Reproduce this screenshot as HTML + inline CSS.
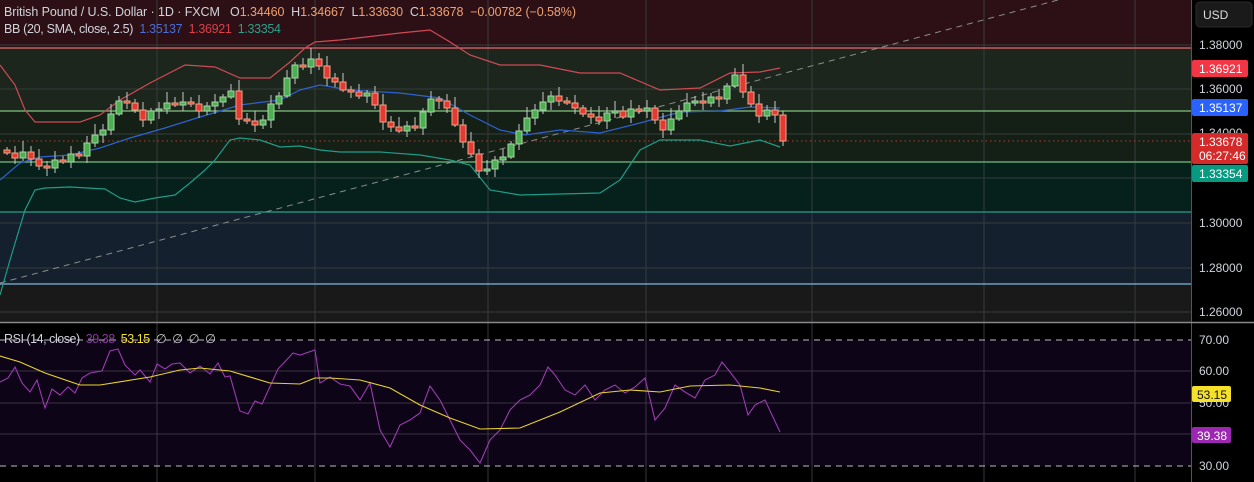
<!DOCTYPE html>
<html><head><meta charset="utf-8"><style>
html,body{margin:0;padding:0;background:#000;width:1254px;height:482px;overflow:hidden;font-family:"Liberation Sans",sans-serif}
svg{position:absolute;left:0;top:0}
.t{font-family:"Liberation Sans",sans-serif}
.lg text{white-space:pre}
</style></head><body>
<svg id="s" width="1254" height="482" xmlns="http://www.w3.org/2000/svg">
<rect x="0" y="0" width="1191" height="48" fill="#2c1015"/>
<rect x="0" y="48" width="1191" height="63" fill="#1c261d"/>
<rect x="0" y="111" width="1191" height="51" fill="#142016"/>
<rect x="0" y="162" width="1191" height="50" fill="#06201b"/>
<rect x="0" y="212" width="1191" height="72" fill="#14202e"/>
<rect x="0" y="284" width="1191" height="38" fill="#191919"/>
<g id="grid" stroke="#363c3a" stroke-width="1"></g>
<line x1="0" y1="48" x2="1191" y2="48" stroke="#e46a6f" stroke-width="1.3"/>
<line x1="0" y1="111" x2="1191" y2="111" stroke="#7fc47f" stroke-width="1.3"/>
<line x1="0" y1="162" x2="1191" y2="162" stroke="#6fbf7f" stroke-width="1.3"/>
<line x1="0" y1="212" x2="1191" y2="212" stroke="#2a9d8a" stroke-width="1.3"/>
<line x1="0" y1="284" x2="1191" y2="284" stroke="#7fb6df" stroke-width="1.3"/>
<line x1="0" y1="283" x2="1058" y2="0" stroke="#8a8f8c" stroke-width="1" stroke-dasharray="6,5"/>
<line x1="0" y1="141" x2="1191" y2="141" stroke="#c0392b" stroke-width="1" stroke-dasharray="1.5,3"/>
<g id="bb" fill="none" stroke-width="1.2"></g>
<g id="candles"></g>
<rect x="0" y="323" width="1191" height="159" fill="#000"/>
<rect x="0" y="340" width="1191" height="126" fill="#0d0418"/>
<g id="rgrid" stroke="#3a3540" stroke-width="1"></g>
<line x1="0" y1="340" x2="1191" y2="340" stroke="#bbb" stroke-dasharray="6,5"/>
<line x1="0" y1="466" x2="1191" y2="466" stroke="#bbb" stroke-dasharray="6,5"/>
<g id="rsi" fill="none" stroke-width="1.1"></g>
<line x1="0" y1="322.5" x2="1254" y2="322.5" stroke="#888" stroke-width="1.5"/>
<rect x="1192" y="0" width="62" height="482" fill="#000"/>
<line x1="1191.5" y1="0" x2="1191.5" y2="482" stroke="#555" stroke-width="1"/>
<line x1="1191" y1="322.5" x2="1254" y2="322.5" stroke="#888" stroke-width="1.5"/>
<rect x="1196" y="2" width="56" height="25" rx="4" fill="#1a1a1a" stroke="#2a2a2a"/>
<text x="1203" y="19" fill="#ddd" font-size="12" class="t">USD</text>
<g fill="#d1d4dc" font-size="12" class="t">
<text x="1199" y="49">1.38000</text>
<text x="1199" y="93">1.36000</text>
<text x="1199" y="137">1.34000</text>
<text x="1199" y="182">1.32000</text>
<text x="1199" y="227">1.30000</text>
<text x="1199" y="272">1.28000</text>
<text x="1199" y="316">1.26000</text>
<text x="1199" y="344">70.00</text>
<text x="1199" y="375">60.00</text>
<text x="1199" y="407">50.00</text>
<text x="1199" y="470">30.00</text>
</g>
<rect x="1192" y="60" width="56" height="17" rx="2" fill="#f23645"/>
<text x="1199" y="73" fill="#fff" font-size="12" class="t">1.36921</text>
<rect x="1192" y="99" width="56" height="17" rx="2" fill="#2962ff"/>
<text x="1199" y="112" fill="#fff" font-size="12" class="t">1.35137</text>
<rect x="1192" y="133" width="56" height="31" rx="2" fill="#d42a2a"/>
<text x="1199" y="146" fill="#fff" font-size="12" class="t">1.33678</text>
<text x="1199" y="160" fill="#fff" font-size="12" class="t">06:27:46</text>
<rect x="1192" y="165" width="56" height="17" rx="2" fill="#089981"/>
<text x="1199" y="178" fill="#fff" font-size="12" class="t">1.33354</text>
<rect x="1192" y="386" width="39" height="16" rx="2" fill="#f5e12a"/>
<text x="1197" y="399" fill="#111" font-size="12" class="t">53.15</text>
<rect x="1192" y="427" width="39" height="16" rx="2" fill="#9c27b0"/>
<text x="1197" y="440" fill="#fff" font-size="12" class="t">39.38</text>
<g font-size="12.5" class="t lg">
<text x="4" y="16" fill="#d1d4dc" textLength="572">British Pound / U.S. Dollar · 1D · FXCM   O<tspan fill="#f0a070">1.34460</tspan>  H<tspan fill="#f0a070">1.34667</tspan>  L<tspan fill="#f0a070">1.33630</tspan>  C<tspan fill="#f0a070">1.33678</tspan>  <tspan fill="#f0a070">−0.00782 (−0.58%)</tspan></text>
<text x="4" y="33" fill="#d1d4dc" textLength="277">BB (20, SMA, close, 2.5)  <tspan fill="#4a6fd8">1.35137</tspan>  <tspan fill="#d8404a">1.36921</tspan>  <tspan fill="#2aa08a">1.33354</tspan></text>
<text x="4" y="343" fill="#d1d4dc" textLength="212">RSI (14, close)  <tspan fill="#8a3aa0">39.38</tspan>  <tspan fill="#f5e12a">53.15</tspan>  <tspan fill="#ccc">∅  ∅  ∅  ∅</tspan></text>
</g>
</svg>
<script>
(function(){
var NS="http://www.w3.org/2000/svg";
function el(p,t,a){var e=document.createElementNS(NS,t);for(var k in a)e.setAttribute(k,a[k]);p.appendChild(e);return e;}
var g=document.getElementById('grid');
[45,89,134,178,223,268,312].forEach(function(y){el(g,'line',{x1:0,y1:y,x2:1191,y2:y});});
[157,315,488,646,812,984,1135].forEach(function(x){el(g,'line',{x1:x,y1:0,x2:x,y2:322});});
var rg=document.getElementById('rgrid');
[371,403,434].forEach(function(y){el(rg,'line',{x1:0,y1:y,x2:1191,y2:y});});
[157,315,488,646,812,984,1135].forEach(function(x){el(rg,'line',{x1:x,y1:323,x2:x,y2:482});});
function pl(p,pts,c){el(p,'polyline',{points:pts.map(function(q){return q.join(',')}).join(' '),stroke:c});}
var bb=document.getElementById('bb');
pl(bb,[[0,65],[15,85],[25,110],[35,122],[80,122],[100,115],[120,100],[150,83],[185,65],[215,67],[240,78],[270,78],[290,62],[305,48],[315,42],[340,40],[400,33],[430,30],[450,42],[470,55],[500,65],[540,65],[580,73],[620,73],[660,90],[700,88],[730,73],[760,72],[780,68]],'#d04a55');
pl(bb,[[0,180],[20,163],[40,157],[70,155],[100,148],[130,138],[165,128],[200,117],[240,105],[280,100],[300,90],[320,85],[350,90],[400,93],[440,98],[470,115],[500,130],[525,135],[560,130],[600,133],[640,123],[680,112],[720,111],[750,107],[780,108]],'#2e62d0');
pl(bb,[[0,295],[10,260],[25,210],[35,190],[45,188],[70,187],[105,189],[120,198],[135,202],[155,198],[175,195],[190,183],[205,170],[215,160],[230,140],[240,138],[260,140],[280,147],[300,146],[320,150],[340,152],[380,152],[420,155],[450,160],[470,165],[490,190],[520,195],[600,193],[620,180],[640,150],[660,140],[700,140],[730,146],[760,140],[780,147]],'#1f9c88');
var ys=[155,158,150,160,165,170,160,158,155,152,145,135,128,115,100,103,110,118,112,108,105,102,100,103,110,108,102,95,92,118,123,125,118,105,95,80,65,62,60,65,80,82,88,92,95,95,105,120,128,130,128,125,110,100,100,110,125,140,155,170,173,160,155,145,130,120,110,100,97,100,105,108,112,118,120,115,112,115,110,108,110,120,128,120,110,105,103,100,98,95,88,75,90,105,115,112,115,141];
var cg=document.getElementById('candles');
var prev=150;
for(var i=0;i<ys.length;i++){
 var x=7+i*8, o=prev, c=ys[i]+((i*7)%5-2);
 if(i==ys.length-1)c=141;
 if(Math.abs(o-c)<2)c=o+((i%2)?2:-2);
 var up=c<o, tp=Math.min(o,c), bt=Math.max(o,c);
 var w1=tp-3-(i*13)%9, w2=bt+2+(i*11)%7;
 el(cg,'line',{x1:x,y1:w1,x2:x,y2:w2,stroke:'#c8c8c8','stroke-width':1});
 el(cg,'rect',{x:x-3,y:tp,width:6,height:bt-tp,fill:up?'#4caf50':'#e53935',stroke:up?'#a5d6a7':'#f4a582','stroke-width':1});
 prev=c;
}
var r=document.getElementById('rsi');
pl(r,[[0,382],[8,378],[15,367],[22,383],[30,392],[37,380],[45,408],[52,389],[60,395],[68,387],[75,393],[82,378],[90,373],[102,371],[110,351],[118,349],[125,365],[135,375],[140,370],[150,382],[157,364],[165,369],[172,364],[180,363],[190,373],[200,366],[210,374],[218,363],[225,377],[230,376],[240,411],[248,414],[255,401],[262,404],[278,369],[293,353],[300,355],[315,350],[320,383],[330,377],[340,384],[350,386],[360,400],[370,383],[380,430],[390,447],[400,425],[410,420],[420,413],[430,386],[440,400],[450,420],[460,440],[470,450],[480,463],[490,440],[500,430],[510,410],[520,400],[530,395],[540,385],[548,367],[555,375],[565,390],[575,395],[585,385],[595,400],[605,390],[615,385],[625,393],[635,387],[645,378],[655,420],[665,408],[675,385],[685,392],[695,398],[705,380],[715,375],[722,362],[730,372],[740,385],[748,415],[755,405],[765,400],[772,415],[780,432]],'#9c3bb0');
pl(r,[[0,356],[20,362],[45,373],[80,385],[100,385],[150,377],[180,370],[200,368],[230,371],[270,383],[300,384],[315,378],[330,378],[360,380],[390,388],[420,405],[450,418],[480,429],[520,428],[560,412],[600,393],[630,390],[660,392],[690,386],[730,385],[760,388],[780,392]],'#e8d42a');
})();
</script>
</body></html>
